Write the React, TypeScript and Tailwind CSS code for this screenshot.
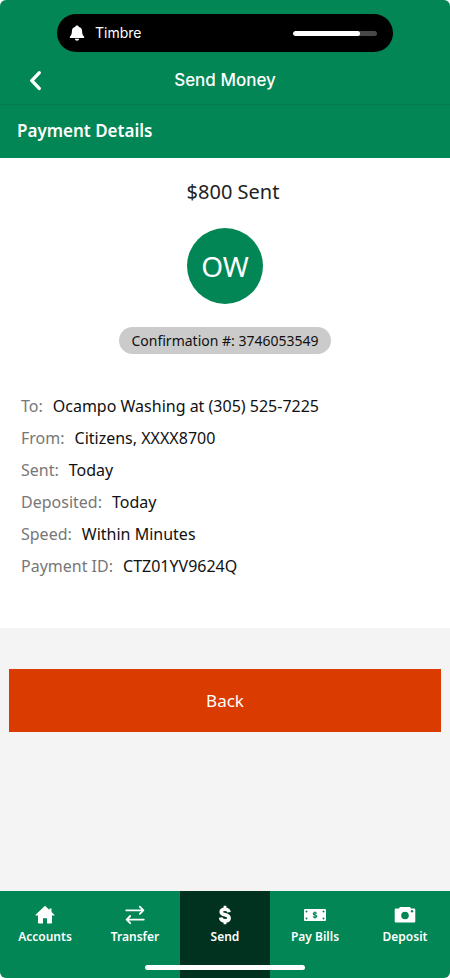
import type { ReactNode } from "react";

interface DetailProps {
  label: string;
  value: string;
}

interface TabProps {
  label: string;
  icon: ReactNode;
  active?: boolean;
}

const details: DetailProps[] = [
  { label: "To:", value: "Ocampo Washing at (305) 525-7225" },
  { label: "From:", value: "Citizens, XXXX8700" },
  { label: "Sent:", value: "Today" },
  { label: "Deposited:", value: "Today" },
  { label: "Speed:", value: "Within Minutes" },
  { label: "Payment ID:", value: "CTZ01YV9624Q" }
];

const BellIcon = () => (
  <svg className="w-4 h-4" viewBox="0 0 16 16" fill="currentColor" aria-hidden="true">
    <path d="M8 .5c.9 0 1.500.5 1.700 1.200C11.900 2.300 13 4 13.100 6c.1 3 .6 4.200 1.700 5.200.4.400.5.7.5 1 0 .5-.4.800-.9.800H1.600c-.5 0-.9-.3-.9-.8 0-.3.1-.6.5-1C2.300 10.200 2.800 9 2.900 6 3 4 4.100 2.300 6.300 1.700 6.500 1 7.100.5 8 .5z" />
    <path d="M5.800 13.800h4.400c-.2 1.200-1.100 1.900-2.200 1.900s-2-.7-2.200-1.900z" />
  </svg>
);

const BackIcon = () => (
  <svg className="w-4 h-5" viewBox="0 0 16 20" fill="none" stroke="currentColor" strokeWidth="3.400" aria-hidden="true">
    <path d="M11.200 1.800 3.800 9.600l7.400 7.800" strokeLinecap="round" strokeLinejoin="round" />
  </svg>
);

const HomeIcon = () => (
  <svg className="w-5 h-5" viewBox="0 0 20 20" fill="currentColor" aria-hidden="true">
    <path d="M9.500 1.200.6 9.700c-.3.400-.1.800.4.800h2V17.600c0 .6.3.900.8.900H8v-5.300h4v5.300h4.200c.5 0 .8-.3.800-.9v-7.100h2c.5 0 .7-.4.400-.8L16.500 7V3.500h-2v1.600L10.500 1.200c-.3-.3-.7-.3-1 0z" />
  </svg>
);

const TransferIcon = () => (
  <svg className="w-5 h-5" viewBox="0 0 20 20" fill="none" stroke="currentColor" strokeWidth="1.800" strokeLinecap="round" strokeLinejoin="round" aria-hidden="true">
    <path d="M1.200 5.300h17.200M14.800 1.700l3.600 3.600-3.600 3.600M18.800 14.600H1.600M5.200 11l-3.600 3.600 3.600 3.600" />
  </svg>
);

const DollarIcon = () => (
  <svg className="w-5 h-5" viewBox="0 0 20 20" fill="none" stroke="currentColor" aria-hidden="true">
    <path d="M14 7.200C13.700 5.100 12.200 4.200 10 4.200c-2.400 0-3.800 1-3.800 2.700 0 4 7.900 1.900 7.900 6.100 0 1.900-1.600 2.900-4 2.900-2.600 0-4.200-1.100-4.500-3.400" strokeWidth="3.600" />
    <path d="M10 .8v3.500M10 15.700v3.500" strokeWidth="2.800" />
  </svg>
);

const BillIcon = () => (
  <svg className="w-[22px] h-5" viewBox="0 0 22 20" fill="none" aria-hidden="true">
    <rect x="0" y="4" width="22" height="12" rx="1" fill="white" />
    <circle cx="2.500" cy="6.500" r="1" fill="#028655" />
    <circle cx="19.500" cy="6.500" r="1" fill="#028655" />
    <circle cx="2.500" cy="13.500" r="1" fill="#028655" />
    <circle cx="19.500" cy="13.500" r="1" fill="#028655" />
    <path d="M12.800 8.600c-.2-.7-.8-1.100-1.800-1.100s-1.700.5-1.700 1.200c0 1.800 3.500.8 3.500 2.600 0 .8-.7 1.200-1.800 1.200s-1.700-.5-1.900-1.200M11 6.500v7" stroke="#028655" strokeWidth="1.200" />
  </svg>
);

const CameraIcon = () => (
  <svg className="w-[22px] h-5" viewBox="0 0 22 20" aria-hidden="true">
    <path d="M2 3.600h3l.6-1.100c.2-.4.500-.5 1-.5h8.800c.5 0 .8.100 1 .5l.6 1.100h3c.7 0 1.300.5 1.300 1.200v11.400c0 .8-.6 1.300-1.300 1.300H2c-.7 0-1.300-.5-1.300-1.300V4.800c0-.7.6-1.200 1.300-1.200z" fill="white" />
    <circle cx="11" cy="10.500" r="3.800" fill="#028655" />
    <circle cx="18" cy="6.200" r="1.200" fill="#028655" />
  </svg>
);

const tabs: TabProps[] = [
  { label: "Accounts", icon: <HomeIcon /> },
  { label: "Transfer", icon: <TransferIcon /> },
  { label: "Send", icon: <DollarIcon />, active: true },
  { label: "Pay Bills", icon: <BillIcon /> },
  { label: "Deposit", icon: <CameraIcon /> }
];

const Detail = ({ label, value }: DetailProps) => (
  <div className="flex gap-2.5">
    <dt className="text-[#777777]">{label}</dt>
    <dd className="text-[#111111]">{value}</dd>
  </div>
);

const Tab = ({ label, icon, active }: TabProps) => (
  <a
    href="#"
    aria-current={active ? "page" : undefined}
    className={`flex flex-1 flex-col items-center gap-1 pt-3.5 text-xs leading-4 font-semibold text-white ${
      active ? "bg-[#013220]" : ""
    }`}
  >
    {icon}
    {label}
  </a>
);

export default function App() {
  return (
    <div className="bg-white">
      <div className="flex min-h-screen flex-col overflow-hidden rounded-md bg-[#f4f4f4] font-['Noto_Sans',sans-serif]">
        <header className="bg-[#028655] pt-3.5 text-white">
          <div className="mx-[57px] flex h-[38px] items-center rounded-full bg-black pr-4 pl-3 font-[Inter,sans-serif]">
            <BellIcon />
            <span className="ml-2.5 text-sm">Timbre</span>
            <div className="ml-auto h-[5px] w-[84px] overflow-hidden rounded-full bg-[#48484a]">
              <div className="h-full w-4/5 rounded-full bg-white" />
            </div>
          </div>
          <div className="grid h-[53px] grid-cols-[1fr_auto_1fr] items-center border-b border-[#057a4c] px-7 pt-1.5">
            <button type="button" aria-label="Go back" className="justify-self-start">
              <BackIcon />
            </button>
            <h1 className="font-[Inter,sans-serif] text-[17px] font-medium">Send Money</h1>
          </div>
          <h2 className="px-[17px] pt-[13px] pb-[15px] text-[17px] leading-[25px] font-semibold">Payment Details</h2>
        </header>

        <main className="flex flex-1 flex-col">
          <section className="flex flex-col items-center bg-white pt-[18px] pb-[46px]">
            <p className="ml-4 text-xl leading-8 text-[#222222]">$800 Sent</p>
            <div className="mt-5 flex h-[76px] w-[76px] items-center justify-center rounded-full bg-[#028655] text-[28px] text-white">
              OW
            </div>
            <p className="mt-[23px] rounded-full bg-[#cbcbcb] px-3 text-sm leading-[27px] text-[#111111]">
              Confirmation #: 3746053549
            </p>
            <dl className="mt-9 w-full px-[21px] text-base leading-8">
              {details.map((detail) => (
                <Detail key={detail.label} {...detail} />
              ))}
            </dl>
          </section>
          <div className="px-[9px] pt-[41px]">
            <button type="button" className="h-[63px] w-full bg-[#d93b00] text-[17px] text-white">
              Back
            </button>
          </div>
        </main>

        <footer className="relative h-[87px] bg-[#028655]">
          <nav className="flex h-full">
            {tabs.map((tab) => (
              <Tab key={tab.label} {...tab} />
            ))}
          </nav>
          <div className="absolute bottom-2 left-1/2 h-[5px] w-40 -translate-x-1/2 rounded-full bg-white" />
        </footer>
      </div>
    </div>
  );
}
